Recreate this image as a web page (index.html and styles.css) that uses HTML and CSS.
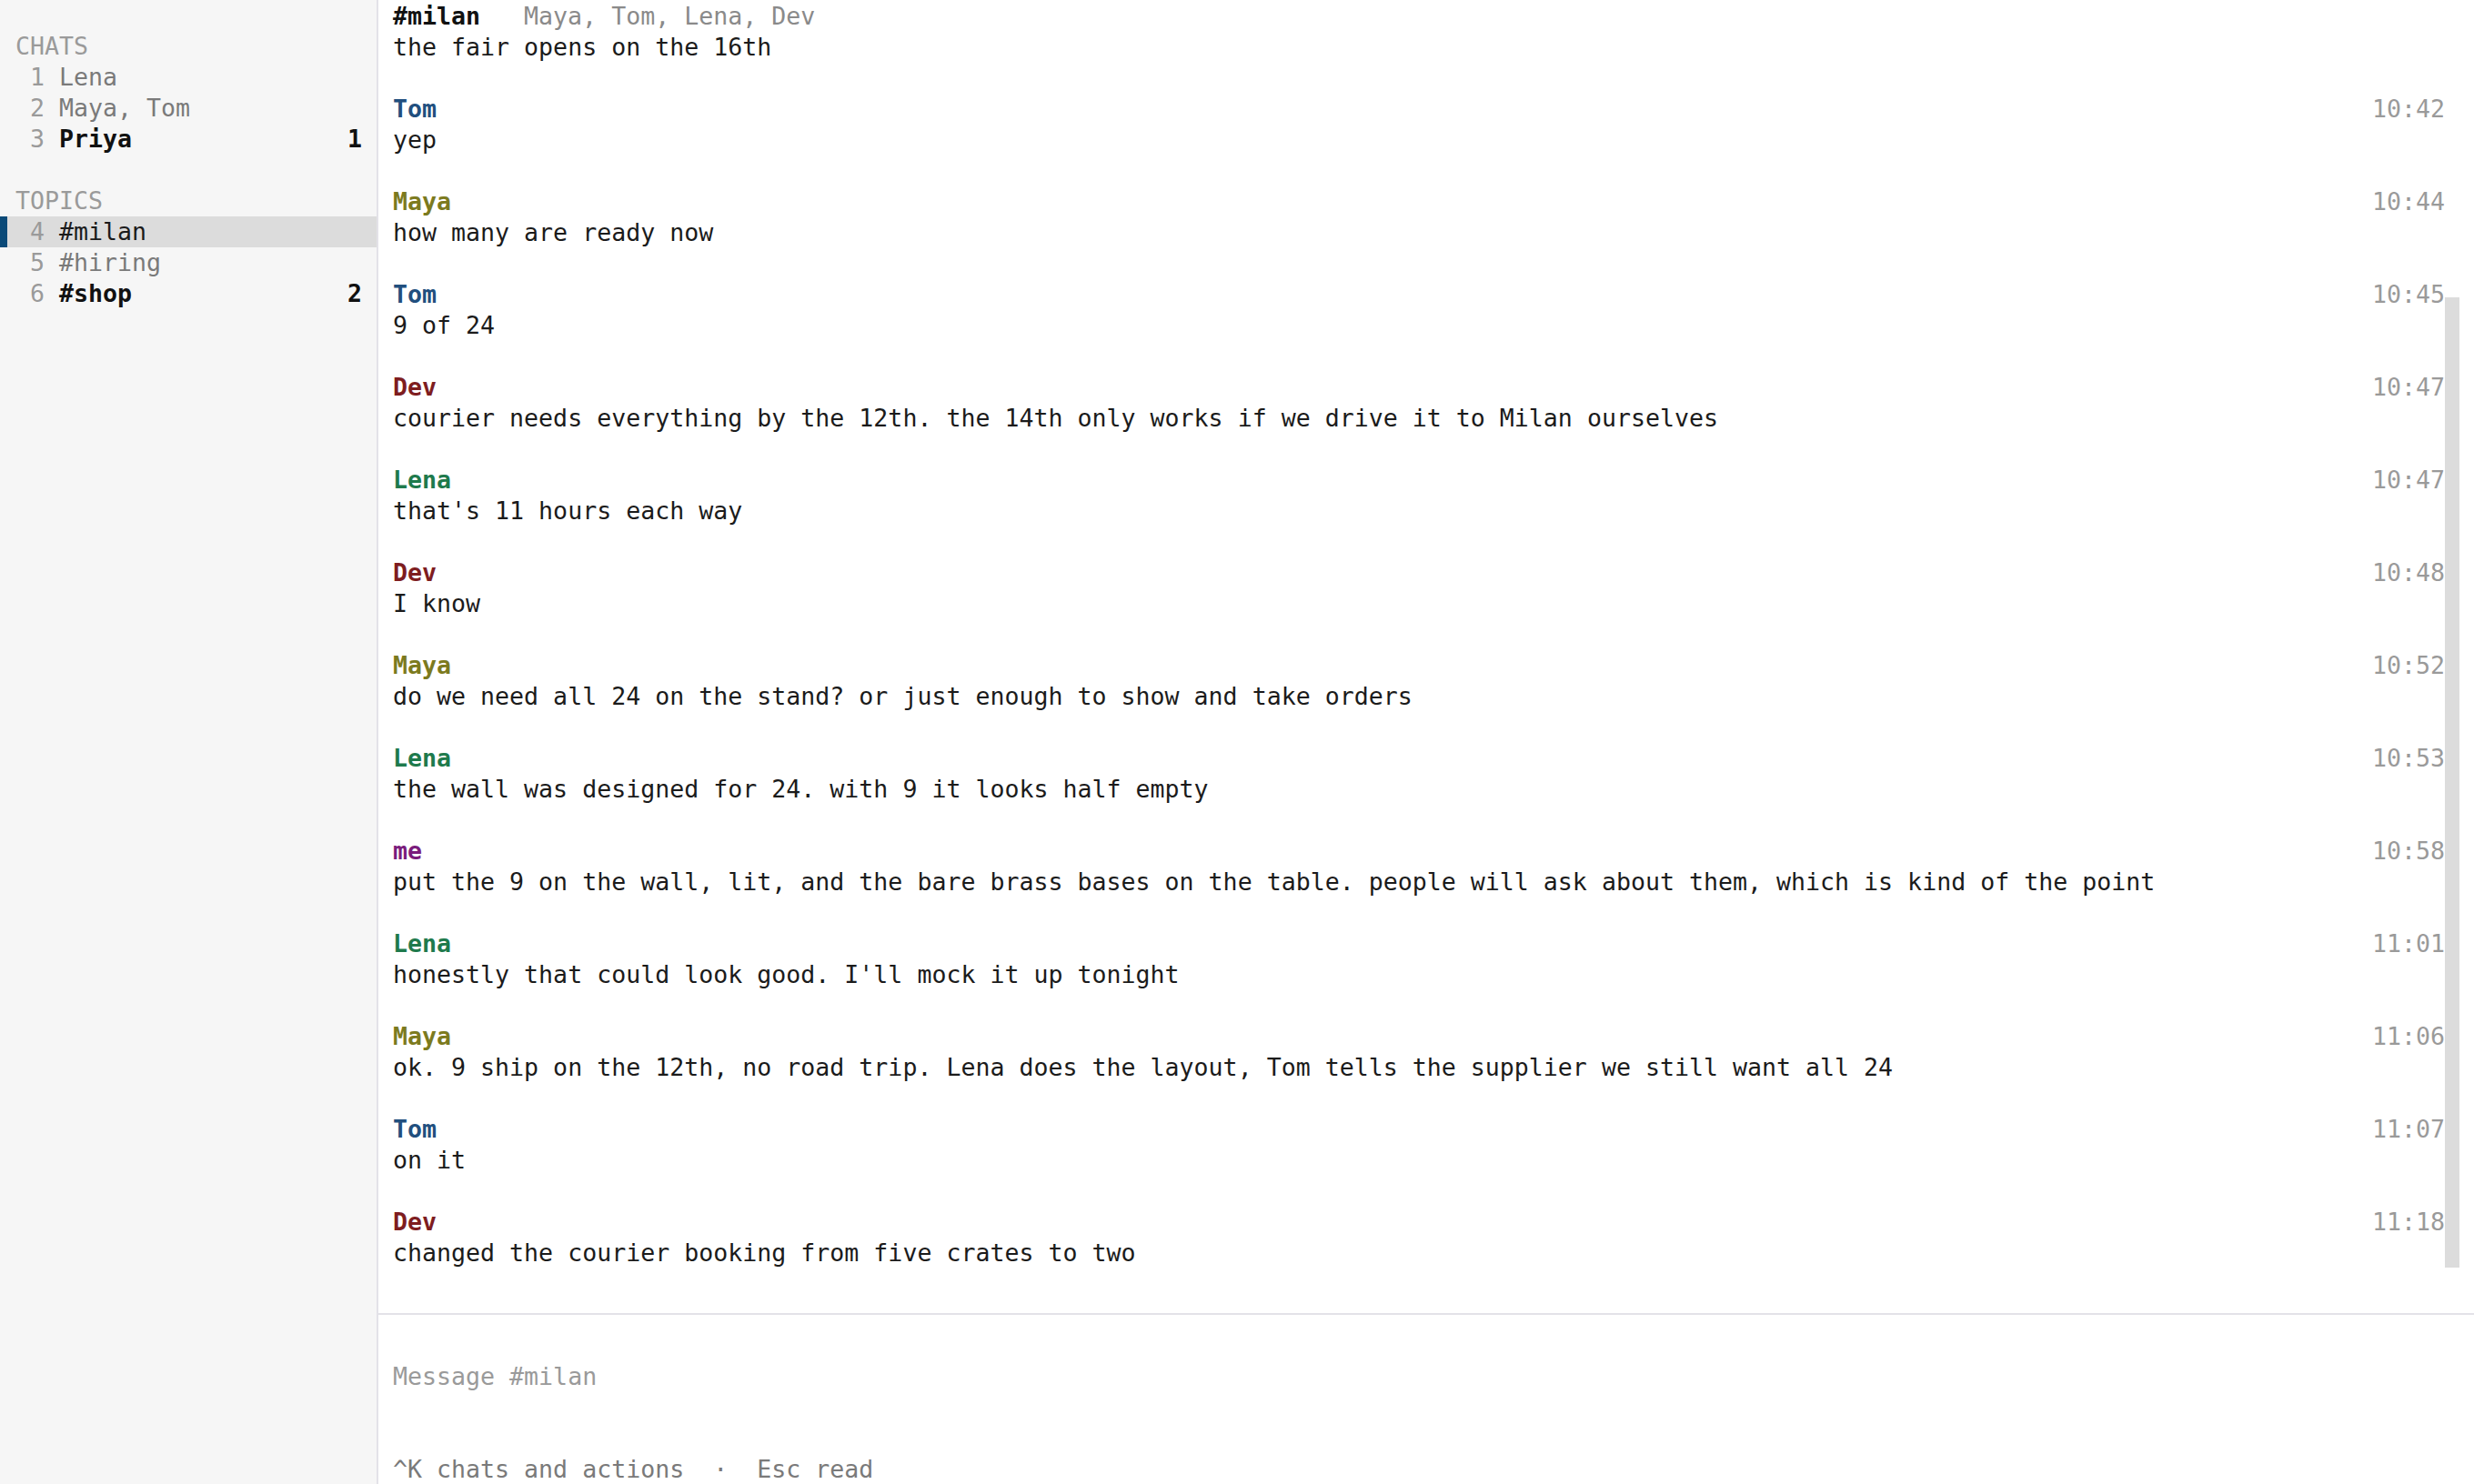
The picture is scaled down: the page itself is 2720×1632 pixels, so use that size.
FILE: index.html
```html
<!DOCTYPE html>
<html lang="en">
<head>
<meta charset="utf-8">
<title>#milan</title>
<link rel="stylesheet" href="styles.css">
</head>
<body>
<div class="app">
  <aside class="sidebar">
    <section class="group">
      <div class="label">CHATS</div>
      <div class="item"><span class="num">1</span><span class="name">Lena</span></div>
      <div class="item"><span class="num">2</span><span class="name">Maya, Tom</span></div>
      <div class="item unread"><span class="num">3</span><span class="name">Priya</span><span class="badge">1</span></div>
    </section>
    <section class="group">
      <div class="label">TOPICS</div>
      <div class="item active"><span class="num">4</span><span class="name">#milan</span></div>
      <div class="item"><span class="num">5</span><span class="name">#hiring</span></div>
      <div class="item unread"><span class="num">6</span><span class="name">#shop</span><span class="badge">2</span></div>
    </section>
  </aside>
  <main class="main">
    <div class="pane">
      <header class="head">
        <div class="title"><span class="chan">#milan</span><span class="members">Maya, Tom, Lena, Dev</span></div>
        <div class="topic">the fair opens on the 16th</div>
      </header>
      <div class="msgs">
        <div class="msg"><div class="meta"><span class="who tom">Tom</span><span class="time">10:42</span></div><div class="text">yep</div></div>
        <div class="msg"><div class="meta"><span class="who maya">Maya</span><span class="time">10:44</span></div><div class="text">how many are ready now</div></div>
        <div class="msg"><div class="meta"><span class="who tom">Tom</span><span class="time">10:45</span></div><div class="text">9 of 24</div></div>
        <div class="msg"><div class="meta"><span class="who dev">Dev</span><span class="time">10:47</span></div><div class="text">courier needs everything by the 12th. the 14th only works if we drive it to Milan ourselves</div></div>
        <div class="msg"><div class="meta"><span class="who lena">Lena</span><span class="time">10:47</span></div><div class="text">that's 11 hours each way</div></div>
        <div class="msg"><div class="meta"><span class="who dev">Dev</span><span class="time">10:48</span></div><div class="text">I know</div></div>
        <div class="msg"><div class="meta"><span class="who maya">Maya</span><span class="time">10:52</span></div><div class="text">do we need all 24 on the stand? or just enough to show and take orders</div></div>
        <div class="msg"><div class="meta"><span class="who lena">Lena</span><span class="time">10:53</span></div><div class="text">the wall was designed for 24. with 9 it looks half empty</div></div>
        <div class="msg"><div class="meta"><span class="who me">me</span><span class="time">10:58</span></div><div class="text">put the 9 on the wall, lit, and the bare brass bases on the table. people will ask about them, which is kind of the point</div></div>
        <div class="msg"><div class="meta"><span class="who lena">Lena</span><span class="time">11:01</span></div><div class="text">honestly that could look good. I'll mock it up tonight</div></div>
        <div class="msg"><div class="meta"><span class="who maya">Maya</span><span class="time">11:06</span></div><div class="text">ok. 9 ship on the 12th, no road trip. Lena does the layout, Tom tells the supplier we still want all 24</div></div>
        <div class="msg"><div class="meta"><span class="who tom">Tom</span><span class="time">11:07</span></div><div class="text">on it</div></div>
        <div class="msg"><div class="meta"><span class="who dev">Dev</span><span class="time">11:18</span></div><div class="text">changed the courier booking from five crates to two</div></div>
      </div>
      <div class="thumb"></div>
    </div>
    <footer class="composer">
      <div class="input">Message #milan</div>
      <div class="hints">^K chats and actions  ·  Esc read</div>
    </footer>
  </main>
</div>
</body>
</html>
```

FILE: styles.css
```css
* { box-sizing: border-box; }

html, body {
  margin: 0;
  padding: 0;
  background: #ffffff;
}

body {
  font-family: "DejaVu Sans Mono", "Liberation Mono", monospace;
  font-size: 26.6px;
  line-height: 34px;
  color: #1b1b1b;
}

.app {
  display: flex;
  width: 2720px;
  height: 1632px;
  overflow: hidden;
}

/* Sidebar */
.sidebar {
  width: 416px;
  flex: none;
  background: #f6f6f6;
  border-right: 2px solid #e3e2e8;
  padding-top: 34px;
  display: flex;
  flex-direction: column;
  gap: 34px;
}

.label {
  padding-left: 17px;
  color: #9a9a9a;
}

.item {
  display: flex;
  height: 34px;
  padding: 0 16px 0 33px;
  color: #7a7a7a;
  white-space: pre;
}

.num {
  width: 32px;
  flex: none;
  color: #9a9a9a;
}

.item.unread .name {
  color: #111111;
  font-weight: bold;
}

.item.active {
  background: #dcdcdc;
  border-left: 8px solid #0b4a78;
  padding-left: 25px;
}

.item.active .name {
  color: #1b1b1b;
}

.badge {
  margin-left: auto;
  font-weight: bold;
  color: #111111;
}

/* Main */
.main {
  flex: 1;
  display: flex;
  flex-direction: column;
  min-width: 0;
}

.pane {
  position: relative;
  height: 1446px;
  flex: none;
  padding: 1px 32px 0 16px;
  border-bottom: 2px solid #e3e2e8;
}

.title {
  display: flex;
  gap: 48px;
}

.chan {
  font-weight: bold;
  color: #111111;
}

.members {
  color: #8a8a8a;
}

.head {
  margin-bottom: 34px;
}

.msg {
  margin-bottom: 34px;
}

.meta {
  display: flex;
  justify-content: space-between;
}

.who { font-weight: bold; }
.who.tom { color: #214f7e; }
.who.maya { color: #7c7a1e; }
.who.dev { color: #7e1d1f; }
.who.lena { color: #1e7a4c; }
.who.me { color: #7a1c7c; }

.time {
  color: #9a9a9a;
}

.text {
  white-space: pre;
}

.thumb {
  position: absolute;
  right: 16px;
  top: 327px;
  width: 16px;
  height: 1067px;
  background: #dcdcdc;
}

/* Composer */
.composer {
  flex: 1;
  padding: 51px 32px 0 16px;
  display: flex;
  flex-direction: column;
  gap: 68px;
}

.input {
  color: #9a9a9a;
}

.hints {
  color: #7a7a7a;
  white-space: pre;
}
```
